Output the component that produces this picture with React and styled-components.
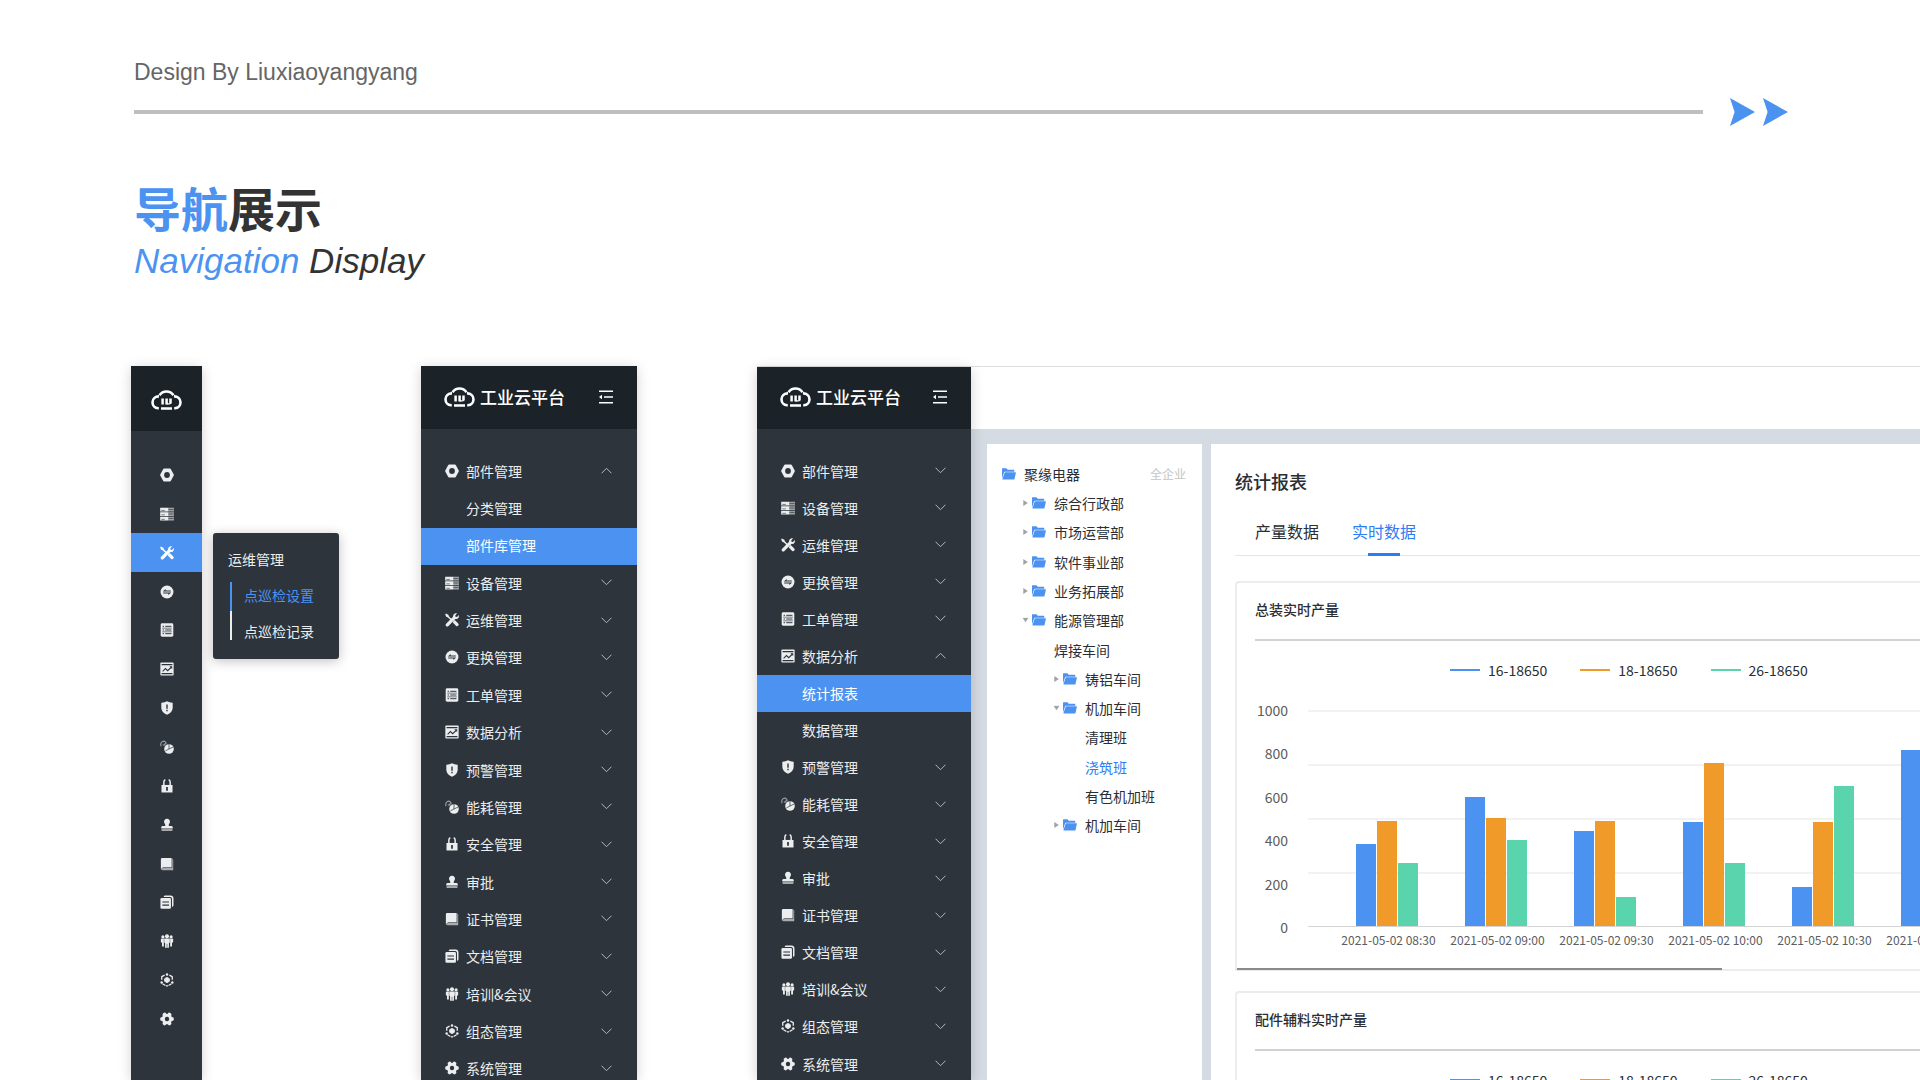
import React, { useState } from 'react';
import styled, { createGlobalStyle, css } from 'styled-components';

const colors = {
  blue: '#4c93f1',
  link: '#2b7df5',
  dark: '#2d343c',
  darker: '#1b2228',
  light: '#ebedee',
  ink: '#333333',
  orange: '#f09a2a',
  green: '#5ad4ac',
};

const GlobalStyle = createGlobalStyle`
  * {
    box-sizing: border-box;
  }

  body {
    margin: 0;
    background: #fff;
    color: #2b2e33;
    font-family: 'Noto Sans CJK SC', 'Noto Sans', sans-serif;
    font-size: 14px;
    line-height: 20px;
  }

  button {
    background: none;
    border: 0;
    color: inherit;
    cursor: pointer;
    font: inherit;
    padding: 0;
    text-align: left;
  }

  a {
    color: inherit;
    text-decoration: none;
  }

  ul {
    list-style: none;
    margin: 0;
    padding: 0;
  }
`;

const Page = styled.div`
  display: flex;
  flex-direction: column;
  height: 100vh;
  overflow: hidden;
  padding-top: 59px;
`;

const Header = styled.header`
  padding: 0 132px 0 134px;
`;

const Author = styled.p`
  color: #666;
  font-family: 'Liberation Sans', Arial, sans-serif;
  font-size: 23px;
  line-height: 26px;
  margin: 0 0 13px;
`;

const RuleRow = styled.div`
  align-items: center;
  display: flex;
  gap: 8px;
`;

const Rule = styled.div`
  background: #bfbfbf;
  flex: 1;
  height: 4px;
  margin-right: 19px;
`;

const Title = styled.h1`
  color: ${colors.ink};
  font-size: 47px;
  font-weight: 700;
  line-height: 56px;
  margin: 53px 0 6px;

  span {
    color: ${colors.blue};
  }
`;

const Subtitle = styled.h2`
  color: ${colors.ink};
  font-family: 'Liberation Sans', Arial, sans-serif;
  font-size: 35px;
  font-style: italic;
  font-weight: 400;
  line-height: 40px;
  margin: 0 0 85px;

  span {
    color: ${colors.blue};
  }
`;

const Showcase = styled.main`
  display: flex;
  flex: 1;
  min-height: 0;
  padding-left: 131px;
`;

const Sidebar = styled.nav`
  background: ${colors.dark};
  box-shadow: 0 2px 12px rgba(0, 0, 0, 0.18);
  color: ${colors.light};
  flex: none;
  margin-right: ${p => p.$after || 0}px;
  position: relative;
  width: ${p => p.$width}px;
  z-index: 1;
`;

const Brand = styled.div`
  align-items: center;
  background: ${colors.darker};
  color: #fff;
  display: flex;
  font-size: 17px;
  font-weight: 500;
  gap: 5px;
  height: ${p => p.$height}px;
  padding: 0 24px 2px 23px;

  button {
    display: flex;
    margin-left: auto;
  }
`;

const IconBrand = styled(Brand)`
  justify-content: center;
  padding: 2px 0 0;
`;

const Menu = styled.ul`
  display: flex;
  flex-direction: column;
  margin-top: 24px;
  min-height: ${p => p.$height}px;

  > li {
    display: flex;
    flex: 1;
    position: relative;
  }
`;

const activeRow = css`
  background: ${colors.blue};
  color: #fff;
`;

const MenuButton = styled.button`
  align-items: center;
  display: flex;
  flex: 1;
  gap: 7px;
  padding: 0 25px 2px 24px;
  ${p => p.$active && activeRow};
`;

const Chevron = styled.svg`
  color: #b4b8bc;
  margin-left: auto;
  transform: ${p => (p.$up ? 'rotate(180deg)' : 'none')};
`;

const SubLink = styled.a`
  align-items: center;
  display: flex;
  flex: 1;
  padding: 0 0 2px 45px;
  ${p => p.$active && activeRow};
`;

const IconButton = styled(MenuButton)`
  justify-content: center;
  padding: 1px 0 0;
`;

const Flyout = styled.div`
  background: ${colors.dark};
  border-radius: 3px;
  box-shadow: 0 2px 12px rgba(0, 0, 0, 0.25);
  color: ${colors.light};
  left: 82px;
  padding: 16px 15px 19px;
  position: absolute;
  top: 0;
  width: 126px;

  h3 {
    font-size: 14px;
    font-weight: 400;
    line-height: 20px;
    margin: 0 0 13px;
  }
`;

const FlyoutLink = styled.a`
  border-left: 2px solid ${p => (p.$active ? colors.blue : colors.light)};
  color: ${p => (p.$active ? colors.blue : 'inherit')};
  display: block;
  line-height: 18px;
  margin-left: 2px;
  padding: 4px 0 7px 12px;
  white-space: nowrap;

  & + & {
    padding: 11px 0 0 12px;
  }
`;

const AppFrame = styled.section`
  border-top: 1px solid #dcdee0;
  display: flex;
  flex: 1;
  min-width: 0;
`;

const Workspace = styled.div`
  background: #d5dbe3;
  display: flex;
  flex: 1;
  flex-direction: column;
  min-width: 0;
`;

const TopBar = styled.div`
  background: #fff;
  height: 62px;
`;

const Panels = styled.div`
  display: flex;
  flex: 1;
  gap: 9px;
  min-height: 0;
  padding: 15px 0 0 16px;
`;

const TreePanel = styled.aside`
  background: #fff;
  flex: none;
  padding: 15px 16px 0 15px;
  width: 215px;
`;

const Tree = styled.ul`
  display: flex;
  flex-direction: column;
  min-height: 381px;

  > li {
    align-items: center;
    display: flex;
    flex: 1;
    justify-content: space-between;
  }
`;

const TreeNode = styled.button`
  align-items: center;
  color: ${p => (p.$active ? colors.link : 'inherit')};
  display: flex;
  gap: 8px;
  padding-left: ${p => (p.$level ? p.$level * 31 - 10 : 0)}px;
  white-space: nowrap;
`;

const Caret = styled.svg`
  margin-right: -4px;
  transform: ${p => (p.$open ? 'rotate(90deg)' : 'none')};
`;

const Scope = styled.span`
  color: #c3c5c8;
  font-size: 12px;
`;

const Report = styled.div`
  background: #fff;
  flex: 1;
  min-width: 0;
  overflow: hidden;
  padding: 24px 0 0 24px;

  h2 {
    font-size: 18px;
    font-weight: 500;
    line-height: 26px;
    margin: 0 0 25px;
  }
`;

const Tabs = styled.div`
  border-bottom: 1px solid #e1e5ef;
  display: flex;
  gap: 33px;
  margin-bottom: 25px;
  padding-left: 20px;
`;

const Tab = styled.button`
  align-items: center;
  color: ${p => (p.$active ? colors.link : 'inherit')};
  display: flex;
  flex-direction: column;
  font-size: 16px;
  line-height: 24px;
  margin-bottom: -1px;

  &::after {
    background: ${p => (p.$active ? colors.link : 'transparent')};
    content: '';
    height: 3px;
    margin-top: 10px;
    width: 32px;
  }
`;

const Card = styled.article`
  border: 2px solid #ececec;
  border-radius: 4px 0 0 0;
  border-right: 0;
  margin-bottom: 20px;
  padding: 16px 0 20px 18px;
  position: relative;

  h3 {
    border-bottom: 2px solid #d2d2d2;
    font-size: 14px;
    font-weight: 500;
    line-height: 20px;
    margin: 0 0 19px;
    padding-bottom: 20px;
  }
`;

const Legend = styled.ul`
  display: flex;
  gap: 33px;
  margin-bottom: 20px;
  padding-left: 195px;

  li {
    align-items: center;
    display: flex;
    gap: 8px;
    white-space: nowrap;
  }
`;

const LegendLine = styled.span`
  background: ${p => p.$color};
  height: 2px;
  width: 30px;
`;

const Chart = styled.div`
  align-items: flex-start;
  color: #5a5c60;
  display: flex;
  gap: 20px;
`;

const YAxis = styled.div`
  display: flex;
  flex-direction: column;
  height: 237px;
  justify-content: space-between;
  text-align: right;
  width: 33px;
`;

const Plot = styled.div`
  flex: 1;
  min-width: 0;
  overflow: hidden;
  padding-top: 10px;
`;

const Columns = styled.div`
  display: grid;
  grid-auto-columns: 109px;
  grid-auto-flow: column;
  justify-content: start;
  padding-left: 24px;
`;

const BarArea = styled(Columns)`
  background-image: linear-gradient(#f2f2f3 2px, transparent 2px);
  background-size: 100% 25%;
  border-bottom: 1px solid #d4d4d6;
  height: 217px;
`;

const BarGroup = styled.div`
  align-items: flex-end;
  display: flex;
  gap: 1px;
  justify-content: center;
`;

const Bar = styled.div`
  background: ${p => p.$color};
  width: 20px;
`;

const XLabels = styled(Columns)`
  font-size: 12px;
  line-height: 18px;
  margin-top: 4px;
  padding-left: 26px;

  span {
    text-align: center;
    white-space: nowrap;
  }
`;

const ScrollThumb = styled.div`
  background: #8a8a8a;
  bottom: -1px;
  height: 2px;
  left: 0;
  position: absolute;
  width: 71%;
`;

/* solid 16px glyphs, c is the colour of the cut-out parts */
const c = colors.dark;
const glyphs = {
  part: (
    <path
      fillRule="evenodd"
      d="M4.600.6h6.800q.6 0 .9.500l3.400 6.400q.3.500 0 1l-3.400 6.400q-.3.500-.9.500H4.600q-.6 0-.9-.5L.3 8.500q-.3-.5 0-1L3.700 1.100q.3-.5.9-.5zM8 4.700a3.300 3.300 0 100 6.600 3.300 3.300 0 000-6.600z"
    />
  ),
  device: (
    <>
      <path d="M.2.800h9v4.300h-9zM.2 5.900h9v4.300h-9zM.2 11h9v4.300h-9z" />
      <path opacity=".7" d="M9.200.800h6.600v4.300H9.200zM9.200 5.900h6.600v4.300H9.200zM9.200 11h6.600v4.300H9.200z" />
      <path stroke={c} strokeWidth=".7" d="M1.500 3.900h4M1.500 9h4M1.500 14.100h4M9.600 2.900h6M9.600 8h6M9.600 13.100h6" />
      <path stroke={c} strokeWidth=".5" strokeOpacity=".7" d="M11.400.800v14.500M13.600.800v14.500" />
    </>
  ),
  tools: (
    <>
      <path d="M1.100.7l2.700 1.200.8 2 4.100 4.100-1.200 1.200-4.100-4.100-2-.8L.2 1.600z" />
      <path d="M9.700 9.100l1.500-1.100 4.200 4.300q.6.800 0 1.600l-1 1q-.8.600-1.600 0L8.900 10.800z" />
      <path d="M11.800.3q1.200-.3 2.100.1l-2.100 2.200.2 1.700 1.700.2L15.700 2.400q.5 1.200-.1 2.700-1.100 2.200-3.700 1.800L4 14.900q-1.300 1.200-2.700.1-1.200-1.400 0-2.700L9.200 4.400Q8.700 1.500 11.800.3z" />
    </>
  ),
  swap: (
    <>
      <circle cx="8" cy="8" r="7.400" />
      <path fill={c} d="M6.500 4.500v1.700h5.800v1.200H3.200zM9.500 11.500V9.800H3.700V8.600h9.100z" />
    </>
  ),
  order: (
    <>
      <rect x=".8" y=".4" width="14.400" height="15.200" rx="1.600" />
      <path stroke={c} strokeWidth="1.100" d="M3 3.800h1.600M6 3.800h7M3 8h1.600M6 8h7M3 12.200h1.600M6 12.200h7" />
      <path stroke={c} strokeWidth=".7" d="M2.500 5.900h11M2.500 10.100h11" />
    </>
  ),
  analysis: (
    <>
      <rect x=".4" y=".6" width="15.200" height="14.800" rx="1" />
      <path fill="none" stroke={c} strokeWidth="1.200" d="M1.800 3h12.400M1.800 13.300h12.400M3 10.600l3.200-3.100 2.600 2.400L12.900 6" />
      <path fill={c} d="M10.700 4.900h3.200v3z" />
    </>
  ),
  warning: (
    <>
      <path d="M8 .3q3 1.700 6.500 1.600V8q-.3 5-6.500 7.800Q1.800 13 1.500 8V1.900Q5 2 8 .3z" />
      <path stroke={c} strokeWidth="1.600" d="M8 4v4.800M8 10v1.700" />
    </>
  ),
  energy: (
    <>
      <path fill="none" stroke="currentColor" strokeWidth="1.200" opacity=".6" d="M1.300 7.200Q-.2 3.600 2.800 1.600q2-.9 3.300.6Q7.500 3.500 6.500 5M3.300 5.200a1.200 1.200 0 102-1.300" />
      <circle cx="10.300" cy="10.300" r="5.500" />
      <path fill="none" stroke={c} strokeWidth=".8" d="M10.300 4.700v5.600l5-2.400M10.300 10.300L6.200 12.400" />
    </>
  ),
  lock: (
    <>
      <path d="M1.700 6.800h12.600v8.600H1.700z" />
      <path fill="none" stroke="currentColor" strokeWidth="1.700" d="M4.400 7V3.600Q4.500 1.400 6.100.9M11.600 7V3.600Q11.500 1.400 9.900.9" />
      <path fill={c} d="M7 9.200h2v4.200H7z" />
    </>
  ),
  stamp: (
    <>
      <path d="M8 .8a3.400 3.400 0 013.200 4.600Q9.700 7.300 10 9h3.300q1.300.2 1.300 1.500V12H1.400v-1.500Q1.400 9.200 2.700 9H6q.3-1.700-1.200-3.600A3.400 3.400 0 018 .8z" />
      <path opacity=".75" d="M1.800 12.800h12.400v1.900H1.800z" />
    </>
  ),
  book: (
    <>
      <path d="M2.600 1h10.700v10.700H3.500L1 14V2.600Q1 1 2.600 1z" />
      <path opacity=".65" d="M14 1.800q1.100.2 1.100 1.400V15H3q-1.600-.1-1.700-1.100l2.300-1.700H14z" />
    </>
  ),
  docs: (
    <>
      <path d="M5.500.5h6.600q3.300.2 3.300 3.300V12q-.2 1.400-1.700 1.500V4.200q-.2-1.800-1.900-1.900H4.200Q4.300.7 5.500.5z" />
      <rect x=".5" y="3.400" width="12" height="12.200" rx="1.400" />
      <path stroke={c} strokeWidth="1.400" d="M2.700 8h7.600M2.700 11.600h7.600" />
    </>
  ),
  people: (
    <>
      <circle cx="3.300" cy="3.300" r="1.800" />
      <circle cx="12.700" cy="3.300" r="1.800" />
      <circle cx="8" cy="2.500" r="2.300" />
      <path d="M1 5.400h3.400v9H2.300V10L1 9.300zM15 5.400h-3.400v9h2.100V10l1.300-.7zM4.800 5.200h6.400v4.600l-1 .8v5H5.800v-5l-1-.8z" />
      <path stroke={c} strokeWidth=".6" d="M8 11.200v4.400" />
    </>
  ),
  config: (
    <>
      <path d="M8 5l2.700 1.500v3L8 11 5.300 9.500v-3z" stroke="currentColor" strokeLinejoin="round" />
      <path fill="none" stroke="currentColor" strokeWidth="1.500" d="M5.300 2.500L2 4.300v3.400M10.700 2.500L14 4.300v3.400M2.800 12.300L6.200 14.300M13.200 12.300L9.800 14.300" />
      <circle cx="8" cy="1.600" r="1.400" />
      <circle cx="1.900" cy="10.900" r="1.400" />
      <circle cx="14.100" cy="10.900" r="1.400" />
      <circle cx="8" cy="14.700" r="1.100" />
    </>
  ),
  system: (
    <>
      <circle cx="8" cy="8" r="5.900" />
      <path stroke="currentColor" strokeWidth="4.400" strokeLinecap="round" d="M2.300 8h11.400M5.200 3l5.600 10M10.800 3L5.200 13" />
      <circle cx="8" cy="8" r="2.500" fill={c} />
    </>
  ),
};

const Glyph = ({ name }) => (
  <svg width="14" height="14" viewBox="0 0 16 16" fill="currentColor" aria-hidden="true">
    {glyphs[name]}
  </svg>
);

const CloudLogo = () => (
  <svg width="31" height="20" viewBox="0 0 31 20" fill="none" stroke="currentColor" aria-hidden="true">
    <path
      strokeWidth="2.600"
      d="M7.800 18.200H7.100C3.700 18 1.500 15.300 1.500 12.200 1.600 8.700 4.400 6.300 8 6.400M8.500 5.200C10.200 2.700 12.600 1.500 15.500 1.500S20.800 2.700 22.500 5.200M23 6.400c3.600-.1 6.400 2.300 6.500 5.800 0 3.100-2.200 5.800-5.600 6h-.7M10 18.500h11"
    />
    <path strokeWidth="2.500" d="M11.600 8.500v6M15.600 8.500v6M19.500 8.500v5" />
    <path strokeWidth="1.300" d="M15.600 13.900h2.400q1.300 0 1.700-1" />
  </svg>
);

const FoldIcon = () => (
  <svg width="14" height="14" viewBox="0 0 14 14" fill="none" stroke="currentColor" strokeWidth="1.400" aria-hidden="true">
    <path d="M0 1.300h14M5 7h9M0 12.700h14" />
    <path d="M0 7l3-2.300v4.600z" fill="currentColor" stroke="none" />
  </svg>
);

const ArrowMark = () => (
  <svg width="25" height="28" viewBox="0 0 25 28" fill={colors.blue} aria-hidden="true">
    <path d="M0 0l25 14L0 28l4.600-14z" />
  </svg>
);

const Folder = () => (
  <svg width="14" height="12" viewBox="0 0 14 12" fill={colors.blue} aria-hidden="true">
    <path d="M0 .8Q0 .3.5.3h4l1.200 1.400h6q.6 0 .6.6v1.400H3q-.7 0-.9.600L0 10.500z" />
    <path d="M3.400 4.200h10.100q.5 0 .4.500l-1.400 6.300q-.1.500-.7.500H.9q-.6 0-.4-.5l2.100-6.200q.2-.6.800-.6z" />
  </svg>
);

const menu = [
  { icon: 'part', label: '部件管理', items: ['分类管理', '部件库管理'] },
  { icon: 'device', label: '设备管理' },
  { icon: 'tools', label: '运维管理', items: ['点巡检设置', '点巡检记录'] },
  { icon: 'swap', label: '更换管理' },
  { icon: 'order', label: '工单管理' },
  { icon: 'analysis', label: '数据分析', items: ['统计报表', '数据管理'] },
  { icon: 'warning', label: '预警管理' },
  { icon: 'energy', label: '能耗管理' },
  { icon: 'lock', label: '安全管理' },
  { icon: 'stamp', label: '审批' },
  { icon: 'book', label: '证书管理' },
  { icon: 'docs', label: '文档管理' },
  { icon: 'people', label: '培训&会议' },
  { icon: 'config', label: '组态管理' },
  { icon: 'system', label: '系统管理' },
];

const tree = [
  { level: 0, label: '聚缘电器', folder: true },
  { level: 1, label: '综合行政部', folder: true },
  { level: 1, label: '市场运营部', folder: true },
  { level: 1, label: '软件事业部', folder: true },
  { level: 1, label: '业务拓展部', folder: true },
  { level: 1, label: '能源管理部', folder: true, open: true },
  { level: 2, label: '焊接车间' },
  { level: 2, label: '铸铝车间', folder: true },
  { level: 2, label: '机加车间', folder: true, open: true },
  { level: 3, label: '清理班' },
  { level: 3, label: '浇筑班' },
  { level: 3, label: '有色机加班' },
  { level: 2, label: '机加车间', folder: true },
];

const series = [
  { name: '16-18650', color: colors.blue },
  { name: '18-18650', color: colors.orange },
  { name: '26-18650', color: colors.green },
];

const output = [
  { time: '2021-05-02 08:30', values: [378, 484, 290] },
  { time: '2021-05-02 09:00', values: [596, 502, 396] },
  { time: '2021-05-02 09:30', values: [440, 484, 134] },
  { time: '2021-05-02 10:00', values: [481, 756, 290] },
  { time: '2021-05-02 10:30', values: [180, 481, 648] },
  { time: '2021-05-02 11:00', values: [815, 520, 360] },
];

const CollapsedSidebar = () => {
  const [open, setOpen] = useState('运维管理');

  return (
    <Sidebar $width={71} $after={219}>
      <IconBrand $height={65}>
        <CloudLogo />
      </IconBrand>
      <Menu $height={583}>
        {menu.map(({ icon, label, items }) => (
          <li key={label}>
            <IconButton type="button" aria-label={label} $active={open === label} onClick={() => setOpen(label)}>
              <Glyph name={icon} />
            </IconButton>
            {open === label && items && (
              <Flyout>
                <h3>{label}</h3>
                {items.map((item, i) => (
                  <FlyoutLink key={item} href="#" $active={i === 0}>
                    {item}
                  </FlyoutLink>
                ))}
              </Flyout>
            )}
          </li>
        ))}
      </Menu>
    </Sidebar>
  );
};

const FullSidebar = ({ width, after, brandHeight, menuHeight, section, page }) => {
  const [open, setOpen] = useState(section);
  const [current, setCurrent] = useState(page);

  return (
    <Sidebar $width={width} $after={after}>
      <Brand $height={brandHeight}>
        <CloudLogo />
        <span>工业云平台</span>
        <button type="button" aria-label="收起菜单">
          <FoldIcon />
        </button>
      </Brand>
      <Menu $height={menuHeight}>
        {menu.map(({ icon, label, items }) => {
          const expanded = open === label;
          return (
            <React.Fragment key={label}>
              <li>
                <MenuButton type="button" aria-expanded={expanded} onClick={() => setOpen(expanded ? '' : label)}>
                  <Glyph name={icon} />
                  {label}
                  <Chevron width="11" height="7" viewBox="0 0 11 7" fill="none" stroke="currentColor" $up={expanded}>
                    <path d="M.5.700l5 5 5-5" />
                  </Chevron>
                </MenuButton>
              </li>
              {expanded &&
                items &&
                items.map(item => (
                  <li key={item}>
                    <SubLink href="#" $active={current === item} onClick={() => setCurrent(item)}>
                      {item}
                    </SubLink>
                  </li>
                ))}
            </React.Fragment>
          );
        })}
      </Menu>
    </Sidebar>
  );
};

const OrgTree = () => {
  const [selected, setSelected] = useState('浇筑班');

  return (
    <TreePanel>
      <Tree>
        {tree.map(({ level, label, folder, open }, i) => (
          <li key={i}>
            <TreeNode type="button" $level={level} $active={selected === label} onClick={() => setSelected(label)}>
              {folder && level > 0 && (
                <Caret width="5" height="6" viewBox="0 0 5 6" fill="#a0a2a5" $open={open}>
                  <path d="M.3 0L4.800 3 .3 6z" />
                </Caret>
              )}
              {folder && <Folder />}
              {label}
            </TreeNode>
            {level === 0 && <Scope>全企业</Scope>}
          </li>
        ))}
      </Tree>
    </TreePanel>
  );
};

const ChartCard = ({ title }) => (
  <Card>
    <h3>{title}</h3>
    <Legend>
      {series.map(({ name, color }) => (
        <li key={name}>
          <LegendLine $color={color} />
          {name}
        </li>
      ))}
    </Legend>
    <Chart>
      <YAxis>
        {[1000, 800, 600, 400, 200, 0].map(tick => (
          <span key={tick}>{tick}</span>
        ))}
      </YAxis>
      <Plot>
        <BarArea>
          {output.map(({ time, values }) => (
            <BarGroup key={time}>
              {values.map((value, i) => (
                <Bar key={series[i].name} $color={series[i].color} style={{ height: `${value / 10}%` }} />
              ))}
            </BarGroup>
          ))}
        </BarArea>
        <XLabels>
          {output.map(({ time }) => (
            <span key={time}>{time}</span>
          ))}
        </XLabels>
      </Plot>
    </Chart>
    <ScrollThumb />
  </Card>
);

const App = () => {
  const [tab, setTab] = useState('实时数据');

  return (
    <Page>
      <GlobalStyle />
      <Header>
        <Author>Design By Liuxiaoyangyang</Author>
        <RuleRow>
          <Rule />
          <ArrowMark />
          <ArrowMark />
        </RuleRow>
        <Title>
          <span>导航</span>展示
        </Title>
        <Subtitle>
          <span>Navigation</span> Display
        </Subtitle>
      </Header>
      <Showcase>
        <CollapsedSidebar />
        <FullSidebar width={216} after={120} brandHeight={63} menuHeight={635} section="部件管理" page="部件库管理" />
        <AppFrame>
          <FullSidebar width={214} brandHeight={62} menuHeight={630} section="数据分析" page="统计报表" />
          <Workspace>
            <TopBar />
            <Panels>
              <OrgTree />
              <Report>
                <h2>统计报表</h2>
                <Tabs role="tablist">
                  {['产量数据', '实时数据'].map(name => (
                    <Tab
                      key={name}
                      type="button"
                      role="tab"
                      aria-selected={tab === name}
                      $active={tab === name}
                      onClick={() => setTab(name)}
                    >
                      {name}
                    </Tab>
                  ))}
                </Tabs>
                <ChartCard title="总装实时产量" />
                <ChartCard title="配件辅料实时产量" />
              </Report>
            </Panels>
          </Workspace>
        </AppFrame>
      </Showcase>
    </Page>
  );
};

export default App;
